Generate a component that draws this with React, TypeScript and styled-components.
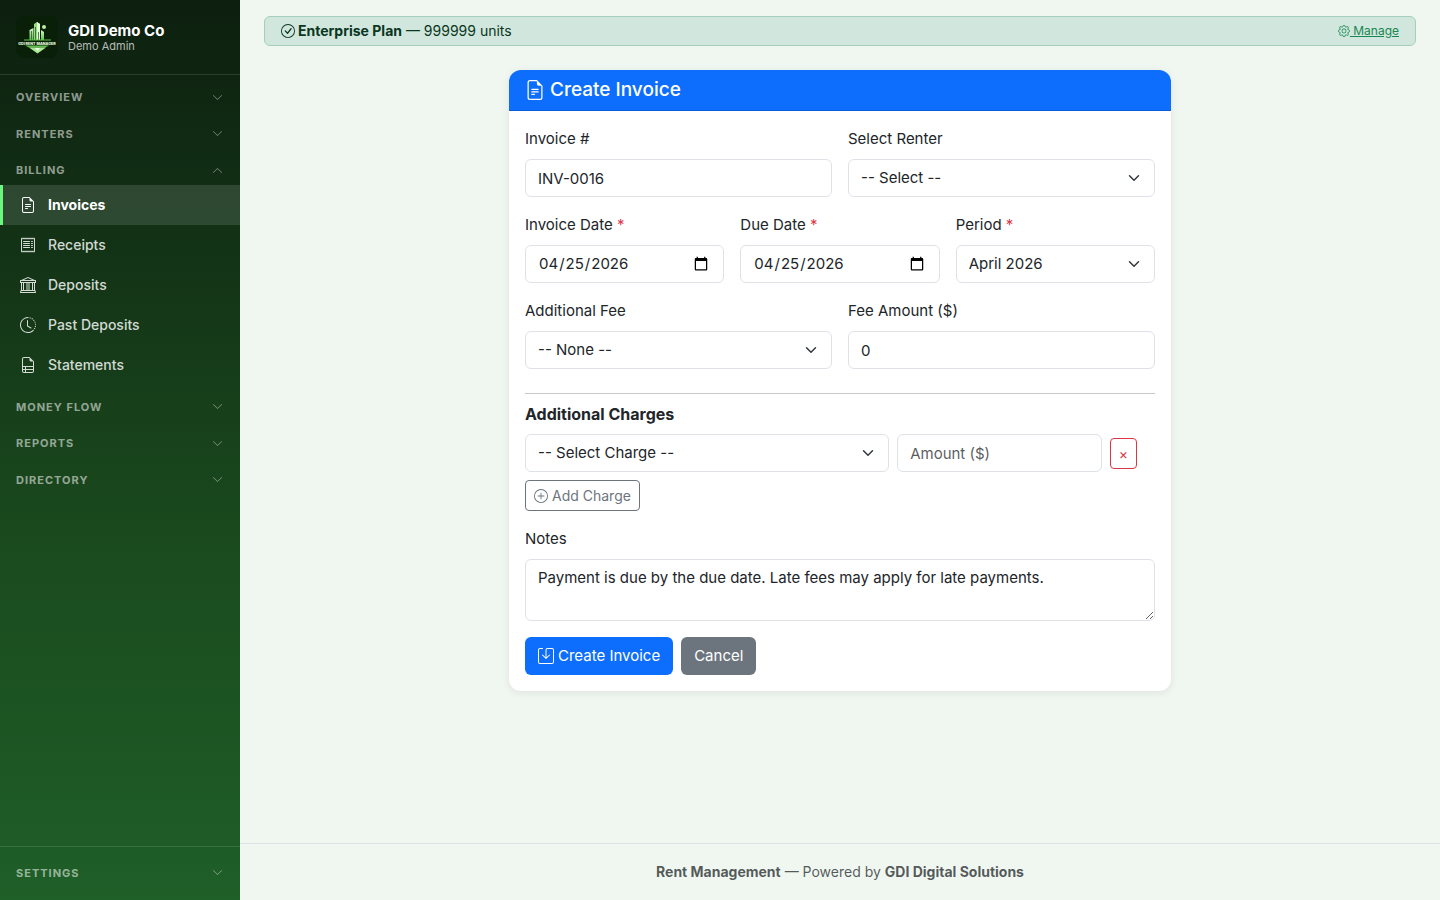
import React from 'react';
import styled, { createGlobalStyle, css } from 'styled-components';
import {
  BsBank,
  BsCheckCircle,
  BsChevronDown,
  BsClockHistory,
  BsFileEarmarkRuled,
  BsFileEarmarkText,
  BsGear,
  BsPlusCircle,
  BsReceipt,
  BsSave,
} from 'react-icons/bs';

const GlobalStyle = createGlobalStyle`
  *, *::before, *::after { box-sizing: border-box; }
  body {
    margin: 0;
    background: #f0f7f0;
    color: #212529;
    font-family: Inter, "Liberation Sans", sans-serif;
    font-size: 15px;
    line-height: 24px;
  }
  button, input, select, textarea { font: inherit; margin: 0; }
`;

/* ---------- Shell ---------- */

const Shell = styled.div`
  display: flex;
  min-height: 100vh;
`;

const Sidebar = styled.aside`
  position: sticky;
  top: 0;
  flex: 0 0 240px;
  height: 100vh;
  display: flex;
  flex-direction: column;
  color: #fff;
  background: linear-gradient(180deg, #0d1f0f 0%, #1a4a1e 60%, #1f5f28 100%);
`;

const Brand = styled.div`
  display: flex;
  align-items: center;
  gap: 10px;
  padding: 16px;
  border-bottom: 1px solid rgba(255, 255, 255, 0.12);
`;

const Logo = styled.svg`
  width: 42px;
  height: 42px;
  border-radius: 8px;
  flex: none;
`;

const BrandName = styled.div`
  font-size: 15px;
  font-weight: 700;
  line-height: 18px;
`;

const BrandUser = styled.div`
  font-size: 11px;
  line-height: 13px;
  color: rgba(255, 255, 255, 0.7);
`;

const Nav = styled.nav`
  flex: 1;
  overflow-y: auto;
`;

const SectionToggle = styled.button<{ $open?: boolean }>`
  display: flex;
  align-items: center;
  justify-content: space-between;
  width: 100%;
  padding: 14px 16px 6px;
  border: 0;
  background: none;
  color: rgba(255, 255, 255, 0.55);
  font-size: 11px;
  font-weight: 700;
  line-height: 1.5;
  letter-spacing: 1px;
  text-transform: uppercase;
  text-align: left;
  cursor: pointer;

  svg {
    width: 11px;
    height: 11px;
    margin-right: 1px;
    opacity: 0.8;
    ${(p) => p.$open && css`transform: rotate(180deg);`}
  }
`;

const NavLink = styled.a<{ $active?: boolean }>`
  display: flex;
  align-items: center;
  gap: 12px;
  height: 40px;
  padding: 0 16px 0 17px;
  border-left: 3px solid ${(p) => (p.$active ? '#69f77c' : 'transparent')};
  background: ${(p) => (p.$active ? 'rgba(255, 255, 255, 0.12)' : 'none')};
  color: ${(p) => (p.$active ? '#fff' : 'rgba(255, 255, 255, 0.82)')};
  font-size: 14px;
  font-weight: ${(p) => (p.$active ? 700 : 500)};
  text-decoration: none;

  svg {
    width: 16px;
    height: 16px;
  }
`;

const SidebarFooter = styled.div`
  padding: 4px 0 13px;
  border-top: 1px solid rgba(255, 255, 255, 0.12);
`;

const Main = styled.div`
  flex: 1;
  min-width: 0;
  display: flex;
  flex-direction: column;
`;

const Content = styled.main`
  flex: 1;
  padding: 16px 24px;
`;

const PageFooter = styled.footer`
  padding: 16px;
  border-top: 1px solid #dee2e6;
  color: rgba(33, 37, 41, 0.75);
  font-size: 14px;
  line-height: 24px;
  text-align: center;
`;

/* ---------- Plan banner ---------- */

const PlanBanner = styled.div`
  display: flex;
  align-items: center;
  justify-content: space-between;
  margin-bottom: 24px;
  padding: 4px 16px;
  border: 1px solid #a3cfbb;
  border-radius: 6px;
  background: #d1e7dd;
  color: #0a3622;
  font-size: 14px;
  line-height: 20px;
`;

const PlanText = styled.span`
  display: flex;
  align-items: center;
  gap: 3px;

  svg {
    width: 14px;
    height: 14px;
  }
`;

const ManageLink = styled.a`
  color: #198754;
  font-size: 12px;

  svg {
    width: 12px;
    height: 12px;
    vertical-align: -2px;
  }
`;

/* ---------- Card ---------- */

const CardRow = styled.div`
  display: flex;
  justify-content: center;
  margin: 0 -12px;
`;

const CardColumn = styled.div`
  width: calc(100% * 7 / 12);
  padding: 0 12px;
`;

const Card = styled.section`
  border-radius: 12px;
  background: #fff;
  box-shadow: 0 2px 8px rgba(0, 0, 0, 0.08);
  overflow: hidden;
`;

const CardHeader = styled.header`
  padding: 8px 16px;
  border-bottom: 1px solid #0b5cd6;
  background: #0d6efd;
  color: #fff;
`;

const CardTitle = styled.h1`
  display: flex;
  align-items: center;
  gap: 5px;
  margin: 0;
  font-size: 19px;
  font-weight: 500;
  line-height: 24px;

  svg {
    width: 20px;
    height: 20px;
  }
`;

const Form = styled.form`
  padding: 16px;
`;

const FieldGrid = styled.div<{ $columns: number }>`
  display: grid;
  grid-template-columns: repeat(${(p) => p.$columns}, minmax(0, 1fr));
  gap: 16px;
  margin-bottom: 16px;
`;

const Field = styled.div`
  display: flex;
  flex-direction: column;
  gap: 8px;
`;

const Required = styled.span`
  color: #dc3545;
`;

const control = css`
  display: block;
  width: 100%;
  min-width: 0;
  padding: 6px 12px;
  border: 1px solid #dee2e6;
  border-radius: 6px;
  background-color: #fff;
  color: #212529;
  line-height: 24px;
  appearance: none;
`;

const Input = styled.input`
  ${control}
  height: 38px;

  &::placeholder {
    color: rgba(33, 37, 41, 0.75);
    opacity: 1;
  }

  &::-webkit-calendar-picker-indicator {
    width: 16px;
    height: 16px;
  }
`;

const chevron =
  "url(\"data:image/svg+xml,%3csvg xmlns='http://www.w3.org/2000/svg' viewBox='0 0 16 16'%3e%3cpath fill='none' stroke='%23343a40' stroke-linecap='round' stroke-linejoin='round' stroke-width='2' d='m2 5 6 6 6-6'/%3e%3c/svg%3e\")";

const Select = styled.select`
  ${control}
  height: 38px;
  padding-right: 36px;
  background-image: ${chevron};
  background-repeat: no-repeat;
  background-position: right 12px center;
  background-size: 16px 12px;
`;

const TextArea = styled.textarea`
  ${control}
  height: 62px;
  resize: vertical;
`;

const Divider = styled.hr`
  margin: 24px 0 8px;
  border: 0;
  border-top: 1px solid #c8c9ca;
`;

const GroupTitle = styled.h2`
  margin: 0 0 8px;
  font-size: 16px;
  font-weight: 700;
  line-height: 24px;
`;

const ChargeRow = styled.div`
  display: grid;
  grid-template-columns: repeat(12, minmax(0, 1fr));
  column-gap: 8px;
  align-items: center;
  margin-bottom: 8px;
`;

const ChargeCell = styled.div<{ $span: number }>`
  grid-column: span ${(p) => p.$span};
  display: flex;
`;

const Button = styled.button<{ $tone: 'primary' | 'secondary' }>`
  display: flex;
  align-items: center;
  gap: 4px;
  padding: 6px 12px;
  border: 1px solid transparent;
  border-radius: 6px;
  background: ${(p) => (p.$tone === 'primary' ? '#0d6efd' : '#6c757d')};
  color: #fff;
  line-height: 24px;
  cursor: pointer;

  svg {
    width: 16px;
    height: 16px;
  }
`;

const OutlineButton = styled.button<{ $tone: 'danger' | 'secondary' }>`
  display: flex;
  align-items: center;
  gap: 4px;
  padding: 4px 8px;
  border: 1px solid currentColor;
  border-radius: 4px;
  background: none;
  color: ${(p) => (p.$tone === 'danger' ? '#dc3545' : '#6c757d')};
  font-size: 14px;
  line-height: 21px;
  cursor: pointer;
`;

const NotesField = styled(Field)`
  margin: 16px 0;
`;

const Actions = styled.div`
  display: flex;
  gap: 8px;
`;

/* ---------- Data ---------- */

const billingLinks = [
  { label: 'Invoices', icon: BsFileEarmarkText, active: true },
  { label: 'Receipts', icon: BsReceipt },
  { label: 'Deposits', icon: BsBank },
  { label: 'Past Deposits', icon: BsClockHistory },
  { label: 'Statements', icon: BsFileEarmarkRuled },
];

const BrandLogo = () => (
  <Logo viewBox="0 0 42 42" aria-hidden="true">
    <defs>
      <linearGradient id="tower" x1="0" y1="0" x2="0" y2="1">
        <stop offset="0" stopColor="#d6f7c4" />
        <stop offset="1" stopColor="#5fc04c" />
      </linearGradient>
    </defs>
    <rect width="42" height="42" fill="#0a1f08" />
    <path d="M13.500 14l4-2v12h-4z" fill="url(#tower)" />
    <path d="M18 8l3-2 3 2v16h-6z" fill="#8fdc78" />
    <path d="M21 6l3 2v16h-3z" fill="#e3fbd8" />
    <path d="M25 14l3 2v8h-3z" fill="url(#tower)" />
    <circle cx="28" cy="11" r="2" fill="#b8f0a4" />
    <path d="M19.500 11v13M22.500 16v8M15.500 15v9" stroke="#1c4a18" strokeWidth="0.7" />
    <path d="M8 24h27" stroke="#5fc04c" strokeWidth="1" />
    <text
      x="21"
      y="28.500"
      fill="#e9ffe0"
      fontSize="3.700"
      fontWeight="800"
      textAnchor="middle"
      fontFamily="Inter, sans-serif"
    >
      GDI RENT MANAGER
    </text>
    <path d="M9 29.500h24l-4 2H13z" fill="#5fc04c" />
    <path d="M13 31.500h17l-8.500 6z" fill="#a8eb92" />
    <path d="M19 32h5l-2.500 3z" fill="#efffe8" />
  </Logo>
);

const Section = ({ label, open }: { label: string; open?: boolean }) => (
  <SectionToggle type="button" $open={open} aria-expanded={!!open}>
    {label}
    <BsChevronDown />
  </SectionToggle>
);

export default function App() {
  return (
    <>
      <GlobalStyle />
      <Shell>
        <Sidebar>
          <Brand>
            <BrandLogo />
            <div>
              <BrandName>GDI Demo Co</BrandName>
              <BrandUser>Demo Admin</BrandUser>
            </div>
          </Brand>
          <Nav>
            <Section label="Overview" />
            <Section label="Renters" />
            <Section label="Billing" open />
            {billingLinks.map(({ label, icon: Icon, active }) => (
              <NavLink key={label} href="#" $active={active}>
                <Icon />
                {label}
              </NavLink>
            ))}
            <Section label="Money Flow" />
            <Section label="Reports" />
            <Section label="Directory" />
          </Nav>
          <SidebarFooter>
            <Section label="Settings" />
          </SidebarFooter>
        </Sidebar>

        <Main>
          <Content>
            <PlanBanner>
              <PlanText>
                <BsCheckCircle />
                <span>
                  <strong>Enterprise Plan</strong> — 999999 units
                </span>
              </PlanText>
              <ManageLink href="#">
                <BsGear /> Manage
              </ManageLink>
            </PlanBanner>

            <CardRow>
              <CardColumn>
                <Card>
                  <CardHeader>
                    <CardTitle>
                      <BsFileEarmarkText />
                      Create Invoice
                    </CardTitle>
                  </CardHeader>
                  <Form onSubmit={(e) => e.preventDefault()}>
                    <FieldGrid $columns={2}>
                      <Field>
                        <label htmlFor="number">Invoice #</label>
                        <Input id="number" type="text" defaultValue="INV-0016" />
                      </Field>
                      <Field>
                        <label htmlFor="renter">Select Renter</label>
                        <Select id="renter">
                          <option>-- Select --</option>
                        </Select>
                      </Field>
                    </FieldGrid>
                    <FieldGrid $columns={3}>
                      <Field>
                        <label htmlFor="invoice-date">
                          Invoice Date <Required>*</Required>
                        </label>
                        <Input id="invoice-date" type="date" defaultValue="2026-04-25" />
                      </Field>
                      <Field>
                        <label htmlFor="due-date">
                          Due Date <Required>*</Required>
                        </label>
                        <Input id="due-date" type="date" defaultValue="2026-04-25" />
                      </Field>
                      <Field>
                        <label htmlFor="period">
                          Period <Required>*</Required>
                        </label>
                        <Select id="period">
                          <option>April 2026</option>
                        </Select>
                      </Field>
                    </FieldGrid>
                    <FieldGrid $columns={2}>
                      <Field>
                        <label htmlFor="fee">Additional Fee</label>
                        <Select id="fee">
                          <option>-- None --</option>
                        </Select>
                      </Field>
                      <Field>
                        <label htmlFor="fee-amount">Fee Amount ($)</label>
                        <Input id="fee-amount" type="text" inputMode="decimal" defaultValue="0" />
                      </Field>
                    </FieldGrid>

                    <Divider />
                    <GroupTitle>Additional Charges</GroupTitle>
                    <ChargeRow>
                      <ChargeCell $span={7}>
                        <Select aria-label="Charge">
                          <option>-- Select Charge --</option>
                        </Select>
                      </ChargeCell>
                      <ChargeCell $span={4}>
                        <Input type="text" aria-label="Charge amount" placeholder="Amount ($)" />
                      </ChargeCell>
                      <ChargeCell $span={1}>
                        <OutlineButton type="button" $tone="danger" aria-label="Remove charge">
                          ×
                        </OutlineButton>
                      </ChargeCell>
                    </ChargeRow>
                    <OutlineButton type="button" $tone="secondary">
                      <BsPlusCircle />
                      Add Charge
                    </OutlineButton>

                    <NotesField>
                      <label htmlFor="notes">Notes</label>
                      <TextArea
                        id="notes"
                        defaultValue="Payment is due by the due date. Late fees may apply for late payments."
                      />
                    </NotesField>

                    <Actions>
                      <Button type="submit" $tone="primary">
                        <BsSave />
                        Create Invoice
                      </Button>
                      <Button type="button" $tone="secondary">
                        Cancel
                      </Button>
                    </Actions>
                  </Form>
                </Card>
              </CardColumn>
            </CardRow>
          </Content>

          <PageFooter>
            <strong>Rent Management</strong> — Powered by <strong>GDI Digital Solutions</strong>
          </PageFooter>
        </Main>
      </Shell>
    </>
  );
}
